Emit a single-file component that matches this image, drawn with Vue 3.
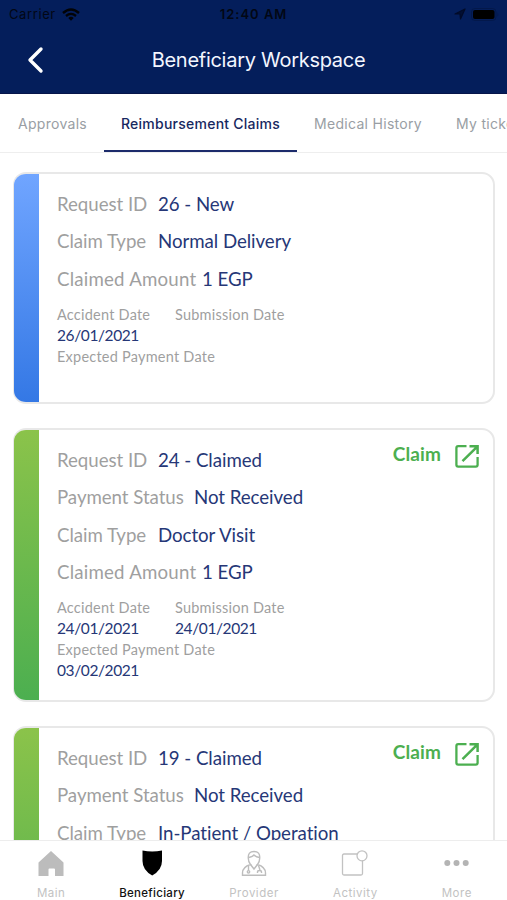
<script setup>
const tabs = [
  { name: 'Approvals', cls: 't1' },
  { name: 'Reimbursement Claims', cls: 't2 active' },
  { name: 'Medical History', cls: 't3' },
  { name: 'My tickets', cls: 't4' },
]
const claims = [
  {
    tone: 'blue',
    fields: [['Request ID', '26 - New'], ['Claim Type', 'Normal Delivery'], ['Claimed Amount', '1 EGP']],
    dates: { accident: '26/01/2021', submission: '', payment: '' },
  },
  {
    tone: 'green', claim: true,
    fields: [['Request ID', '24 - Claimed'], ['Payment Status', 'Not Received'], ['Claim Type', 'Doctor Visit'], ['Claimed Amount', '1 EGP']],
    dates: { accident: '24/01/2021', submission: '24/01/2021', payment: '03/02/2021' },
  },
  {
    tone: 'green', claim: true,
    fields: [['Request ID', '19 - Claimed'], ['Payment Status', 'Not Received'], ['Claim Type', 'In-Patient / Operation']],
  },
]
const labelClass = (label) => label.toLowerCase().replace(' ', '-')
</script>

<template>
  <div class="screen">
    <header class="header">
      <div class="status">
        <div class="carrier">
          <span>Carrier</span>
          <svg width="18" height="13" viewBox="0 0 18 13" fill="none" stroke="#020306">
            <path d="M1 5Q9-2 17 5" stroke-width="2.4" />
            <path d="M4 8Q9 3.8 14 8" stroke-width="2.3" />
            <path d="M6.3 10Q9 7.5 11.7 10L9 12.8Z" fill="#020306" stroke="none" />
          </svg>
        </div>
        <b class="clock">12:40 AM</b>
        <div class="power">
          <svg width="12" height="12" viewBox="0 0 12 12" fill="#020f33" stroke="#020b28" stroke-width="1.2" stroke-linejoin="round">
            <path d="M1 6L11 1L6.5 11L6 6Z" />
          </svg>
          <svg width="28" height="13" viewBox="0 0 28 13">
            <rect x=".5" y=".5" width="24.5" height="12" rx="3.5" fill="none" stroke="#03184b" />
            <rect x="2" y="2" width="21.5" height="9" rx="2" fill="#000" />
            <path d="M26.5 4.5Q28 6.5 26.5 8.5Z" fill="#03184b" />
          </svg>
        </div>
      </div>
      <div class="nav">
        <svg class="back" width="18" height="28" viewBox="0 0 18 28" fill="none" stroke="#fff" stroke-width="3.4" stroke-linecap="round" stroke-linejoin="round">
          <path d="M15 3L4 14L15 25" />
        </svg>
        <h1>Beneficiary Workspace</h1>
      </div>
    </header>

    <nav class="tabs">
      <span v-for="t in tabs" :key="t.name" class="tab" :class="t.cls"><span>{{ t.name }}</span></span>
    </nav>

    <main class="list">
      <article v-for="(c, i) in claims" :key="i" class="card">
        <div class="stripe" :class="c.tone"></div>
        <div class="body">
          <div v-for="f in c.fields" :key="f[0]" class="field">
            <span class="label" :class="labelClass(f[0])">{{ f[0] }}</span>
            <span class="value">{{ f[1] }}</span>
          </div>
          <template v-if="c.dates">
            <div class="dates">
              <div class="date first"><span class="key">Accident Date</span><span class="day">{{ c.dates.accident }}</span></div>
              <div class="date"><span class="key">Submission Date</span><span class="day">{{ c.dates.submission }}</span></div>
            </div>
            <div class="date"><span class="key">Expected Payment Date</span><span class="day">{{ c.dates.payment }}</span></div>
          </template>
        </div>
        <div v-if="c.claim" class="action">
          <b>Claim</b>
          <svg width="24" height="24" viewBox="0 0 24 24" fill="none" stroke="#4caf50" stroke-width="2.3">
            <path d="M11.500 2.200H3.200Q1.400 2.200 1.400 4V20.800Q1.400 22.600 3.200 22.600H20.800Q22.600 22.600 22.600 20.800V13" />
            <path d="M14.500 2.200H22.600V10M22 2.800L7.500 17.200" stroke-width="2.500" />
          </svg>
        </div>
      </article>
    </main>

    <footer class="bottom">
      <div class="item">
        <svg width="28" height="28" viewBox="0 0 28 28" fill="#bcbcbc"><path d="M14 1L26.500 12.500V26H18V19.500Q18 18.500 17 18.500H12.500Q11.500 18.500 11.500 19.500V26H1.500V12.500Z" /></svg>
        <span>Main</span>
      </div>
      <div class="item on">
        <svg width="28" height="28" viewBox="0 0 28 28" fill="#000"><path d="M4.500 .500Q14 2.500 24 .500V11Q24 20 14.200 25.500Q4.500 20 4.500 11Z" /></svg>
        <span>Beneficiary</span>
      </div>
      <div class="item">
        <svg width="28" height="28" viewBox="0 0 28 28" fill="none" stroke="#bdbdbd" stroke-width="1.400">
          <path d="M8.300 8Q7.800 1.500 14 1.500T19.700 8Q19.800 12 17.500 14.500Q25.500 17 25.500 23V25.300H2.500V23Q2.500 17 10.500 14.500Q8.200 12 8.300 8Z" />
          <path d="M9 7.500Q13 6.500 14 5Q16 7 19.500 7.500M10.500 14.500L14 19L17.500 14.500M8.500 16V20.500M18.500 15.500L20 20" />
          <path d="M17.500 23V22Q17.500 20.500 19.500 20.500T21.500 22V23" />
          <circle cx="8.500" cy="21.800" r="1.200" />
        </svg>
        <span>Provider</span>
      </div>
      <div class="item">
        <svg width="28" height="28" viewBox="0 0 28 28" fill="none" stroke="#c2c2c2" stroke-width="1.300">
          <path d="M16.500 4H3Q1.500 4 1.500 5.500V23.500Q1.500 25 3 25H20Q21.500 25 21.500 23.500V10.500" /><circle cx="21" cy="5.800" r="5" />
        </svg>
        <span>Activity</span>
      </div>
      <div class="item">
        <svg width="28" height="28" viewBox="0 0 28 28" fill="#b4b4b4"><circle cx="4.300" cy="13" r="3" /><circle cx="13.500" cy="13" r="3" /><circle cx="22.700" cy="13" r="3" /></svg>
        <span>More</span>
      </div>
    </footer>
  </div>
</template>

<style>
body { overflow: hidden; background: #fff; }
</style>
<style scoped>
* { box-sizing: border-box; }
.screen { width: 507px; height: 900px; display: flex; flex-direction: column; overflow: hidden; font-family: Lato, sans-serif; background: #fff; }
.header { height: 94px; flex: none; background: #041e5b; font-family: Inter, sans-serif; border-bottom: 1px solid #06154a; }
.status { height: 28px; display: grid; grid-template-columns: 1fr auto 1fr; align-items: center; padding: 0 9px; color: #020714; font-size: 13px; }
.carrier { display: flex; gap: 6px; align-items: center; letter-spacing: .6px; }
.clock { font-weight: 600; letter-spacing: 1px; }
.power { display: flex; justify-content: flex-end; align-items: center; gap: 4px; }
.power svg:first-child { margin-right: 1px; }
.power svg:last-child { margin-right: -1px; }
.nav { height: 64px; display: grid; grid-template-columns: 80px 1fr 70px; align-items: center; }
.back { margin-left: 26px; }
h1 { margin: 0; text-align: center; color: #f3f6ff; font-size: 20px; font-weight: 400; letter-spacing: -.28px; white-space: nowrap; }
.tabs { height: 59px; flex: none; display: flex; font-family: Inter, sans-serif; font-size: 14px; color: #999ea4; border-bottom: 1px solid #eee; white-space: nowrap; overflow: hidden; }
.tab { flex: none; height: 59px; display: flex; align-items: center; justify-content: center; }
.t1 { width: 105px; margin-right: -1px; letter-spacing: .3px; }
.t2 { width: 193px; letter-spacing: .25px; }
.t3 { width: 142px; letter-spacing: .3px; }
.t4 { padding-left: 17px; letter-spacing: .3px; }
.active { color: #17285f; font-weight: 500; border-bottom: 3px solid #1c2b6b; padding-top: 2px; }
.list { flex: 1; min-height: 0; overflow: hidden; padding: 19px 12px 0 13px; display: flex; flex-direction: column; gap: 24px; }
.card { flex: none; display: flex; border: 2px solid #e8e8e8; border-left-width: 1px; border-radius: 13px; overflow: hidden; height: 232px; }
.card + .card { height: 274px; }
.stripe { width: 25px; flex: none; }
.blue { background: linear-gradient(#70a5ff, #3478e5); }
.green { background: linear-gradient(#8bc34a, #4caf50); }
.body { flex: 1; padding: 11px 0 0 18px; white-space: nowrap; }
.field { height: 37.500px; display: flex; align-items: center; font-size: 18.700px; letter-spacing: -.05px; }
.label { color: #9f9f9f; flex: none; width: 101px; }
.payment-status { width: 137px; }
.claimed-amount { width: 145px; letter-spacing: .2px; }
.value { color: #263777; }
.dates { display: flex; margin-top: 6px; }
.first { width: 118px; }
.date { display: flex; flex-direction: column; height: 42.300px; }
.key { height: 21px; line-height: 21px; font-size: 14.500px; letter-spacing: .23px; color: #9f9f9f; }
.day { height: 21px; line-height: 21px; font-size: 15.500px; letter-spacing: -.4px; color: #263777; }
.action { display: flex; gap: 14px; height: 26px; align-items: center; margin: 13px 14px 0 0; color: #4caf50; font-size: 19px; letter-spacing: .1px; }
.action b { margin-top: -5px; }
.bottom { height: 60px; flex: none; display: grid; grid-template-columns: repeat(5, 1fr); border-top: 1px solid #ededed; background: #fff; }
.item { display: flex; flex-direction: column; align-items: center; padding: 9px 0 0 1px; font-family: Inter, sans-serif; font-size: 11.500px; letter-spacing: .5px; color: #c2c2c2; }
.item svg { flex: none; }
.item span { line-height: 14px; margin-top: 8px; }
.on { color: #111; font-weight: 500; letter-spacing: .3px; padding-left: 0; }
</style>
